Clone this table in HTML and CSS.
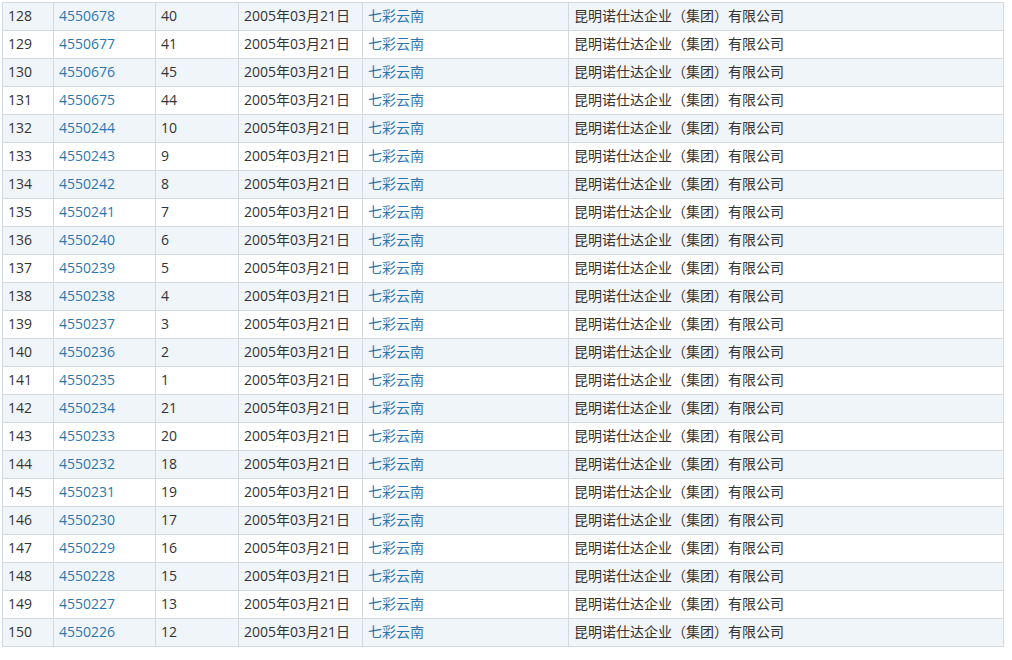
FILE: index.html
```html
<!DOCTYPE html>
<html lang="zh-CN">
<head>
<meta charset="utf-8">
<title>商标列表</title>
<link rel="stylesheet" href="styles.css">
</head>
<body>
<div class="wrap">
<table class="list">
<colgroup>
<col class="c1"><col class="c2"><col class="c3"><col class="c4"><col class="c5"><col class="c6">
</colgroup>
<tbody>
<tr class="odd"><td>128</td><td><a href="#">4550678</a></td><td>40</td><td>2005年03月21日</td><td><a href="#">七彩云南</a></td><td>昆明诺仕达企业（集团）有限公司</td></tr>
<tr><td>129</td><td><a href="#">4550677</a></td><td>41</td><td>2005年03月21日</td><td><a href="#">七彩云南</a></td><td>昆明诺仕达企业（集团）有限公司</td></tr>
<tr class="odd"><td>130</td><td><a href="#">4550676</a></td><td>45</td><td>2005年03月21日</td><td><a href="#">七彩云南</a></td><td>昆明诺仕达企业（集团）有限公司</td></tr>
<tr><td>131</td><td><a href="#">4550675</a></td><td>44</td><td>2005年03月21日</td><td><a href="#">七彩云南</a></td><td>昆明诺仕达企业（集团）有限公司</td></tr>
<tr class="odd"><td>132</td><td><a href="#">4550244</a></td><td>10</td><td>2005年03月21日</td><td><a href="#">七彩云南</a></td><td>昆明诺仕达企业（集团）有限公司</td></tr>
<tr><td>133</td><td><a href="#">4550243</a></td><td>9</td><td>2005年03月21日</td><td><a href="#">七彩云南</a></td><td>昆明诺仕达企业（集团）有限公司</td></tr>
<tr class="odd"><td>134</td><td><a href="#">4550242</a></td><td>8</td><td>2005年03月21日</td><td><a href="#">七彩云南</a></td><td>昆明诺仕达企业（集团）有限公司</td></tr>
<tr><td>135</td><td><a href="#">4550241</a></td><td>7</td><td>2005年03月21日</td><td><a href="#">七彩云南</a></td><td>昆明诺仕达企业（集团）有限公司</td></tr>
<tr class="odd"><td>136</td><td><a href="#">4550240</a></td><td>6</td><td>2005年03月21日</td><td><a href="#">七彩云南</a></td><td>昆明诺仕达企业（集团）有限公司</td></tr>
<tr><td>137</td><td><a href="#">4550239</a></td><td>5</td><td>2005年03月21日</td><td><a href="#">七彩云南</a></td><td>昆明诺仕达企业（集团）有限公司</td></tr>
<tr class="odd"><td>138</td><td><a href="#">4550238</a></td><td>4</td><td>2005年03月21日</td><td><a href="#">七彩云南</a></td><td>昆明诺仕达企业（集团）有限公司</td></tr>
<tr><td>139</td><td><a href="#">4550237</a></td><td>3</td><td>2005年03月21日</td><td><a href="#">七彩云南</a></td><td>昆明诺仕达企业（集团）有限公司</td></tr>
<tr class="odd"><td>140</td><td><a href="#">4550236</a></td><td>2</td><td>2005年03月21日</td><td><a href="#">七彩云南</a></td><td>昆明诺仕达企业（集团）有限公司</td></tr>
<tr><td>141</td><td><a href="#">4550235</a></td><td>1</td><td>2005年03月21日</td><td><a href="#">七彩云南</a></td><td>昆明诺仕达企业（集团）有限公司</td></tr>
<tr class="odd"><td>142</td><td><a href="#">4550234</a></td><td>21</td><td>2005年03月21日</td><td><a href="#">七彩云南</a></td><td>昆明诺仕达企业（集团）有限公司</td></tr>
<tr><td>143</td><td><a href="#">4550233</a></td><td>20</td><td>2005年03月21日</td><td><a href="#">七彩云南</a></td><td>昆明诺仕达企业（集团）有限公司</td></tr>
<tr class="odd"><td>144</td><td><a href="#">4550232</a></td><td>18</td><td>2005年03月21日</td><td><a href="#">七彩云南</a></td><td>昆明诺仕达企业（集团）有限公司</td></tr>
<tr><td>145</td><td><a href="#">4550231</a></td><td>19</td><td>2005年03月21日</td><td><a href="#">七彩云南</a></td><td>昆明诺仕达企业（集团）有限公司</td></tr>
<tr class="odd"><td>146</td><td><a href="#">4550230</a></td><td>17</td><td>2005年03月21日</td><td><a href="#">七彩云南</a></td><td>昆明诺仕达企业（集团）有限公司</td></tr>
<tr><td>147</td><td><a href="#">4550229</a></td><td>16</td><td>2005年03月21日</td><td><a href="#">七彩云南</a></td><td>昆明诺仕达企业（集团）有限公司</td></tr>
<tr class="odd"><td>148</td><td><a href="#">4550228</a></td><td>15</td><td>2005年03月21日</td><td><a href="#">七彩云南</a></td><td>昆明诺仕达企业（集团）有限公司</td></tr>
<tr><td>149</td><td><a href="#">4550227</a></td><td>13</td><td>2005年03月21日</td><td><a href="#">七彩云南</a></td><td>昆明诺仕达企业（集团）有限公司</td></tr>
<tr class="odd"><td>150</td><td><a href="#">4550226</a></td><td>12</td><td>2005年03月21日</td><td><a href="#">七彩云南</a></td><td>昆明诺仕达企业（集团）有限公司</td></tr>
</tbody>
</table>
</div>
</body>
</html>
```

FILE: styles.css
```css
html, body {
  margin: 0;
  padding: 0;
  background: #ffffff;
}
.wrap {
  padding: 2px 0 0 2px;
}
.list {
  border-collapse: separate;
  border-spacing: 0;
  table-layout: fixed;
  width: 1002px;
  border-right: 1px solid #d3d9e0;
  border-bottom: 1px solid #d3d9e0;
  font-family: "Open Sans", "Noto Sans CJK SC", sans-serif;
  font-size: 14px;
  color: #333333;
}
.c1 { width: 51px; }
.c2 { width: 102px; }
.c3 { width: 83px; }
.c4 { width: 124px; }
.c5 { width: 206px; }
.c6 { width: 435px; }
.list td {
  box-sizing: border-box;
  height: 28px;
  padding: 0 0 1px 5px;
  border-left: 1px solid #d3d9e0;
  border-top: 1px solid #d3d9e0;
  line-height: 26px;
  white-space: nowrap;
  overflow: hidden;
}
.list tr.odd td {
  background: #f0f5fa;
}
.list a {
  color: #2a77b0;
  text-decoration: none;
}
```
